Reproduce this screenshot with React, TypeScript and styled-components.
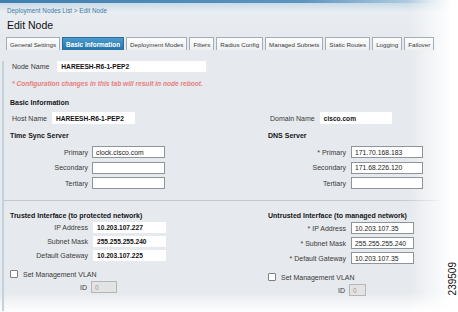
import React from "react";
import styled, {createGlobalStyle} from "styled-components";

const GlobalStyle = createGlobalStyle`
  html, body {
    margin: 0;
    padding: 0;
    background: #ffffff;
  }
  body {
    font-family: "Liberation Sans", Arial, sans-serif;
  }
`

interface IField {
    label: string
    value?: string
    required?: boolean
}

const tabs = [
    "General Settings",
    "Basic Information",
    "Deployment Modes",
    "Filters",
    "Radius Config",
    "Managed Subnets",
    "Static Routes",
    "Logging",
    "Failover",
]

const timeSync: IField[] = [
    {label: "Primary", value: "clock.cisco.com"},
    {label: "Secondary"},
    {label: "Tertiary"},
]
const dnsServer: IField[] = [
    {label: "Primary", value: "171.70.168.183", required: true},
    {label: "Secondary", value: "171.68.226.120"},
    {label: "Tertiary"},
]
const trusted: IField[] = [
    {label: "IP Address", value: "10.203.107.227"},
    {label: "Subnet Mask", value: "255.255.255.240"},
    {label: "Default Gateway", value: "10.203.107.225"},
]
const untrusted: IField[] = [
    {label: "IP Address", value: "10.203.107.35", required: true},
    {label: "Subnet Mask", value: "255.255.255.240", required: true},
    {label: "Default Gateway", value: "10.203.107.35", required: true},
]

const App: React.FC = () => {
    return (
        <Page>
            <GlobalStyle/>
            <Header>
                <Breadcrumb>Deployment Nodes List &gt; Edit Node</Breadcrumb>
                <Title>Edit Node</Title>
            </Header>
            <TabBar>
                {tabs.map((t) => (
                    <Tab key={t} $active={t === "Basic Information"}>{t}</Tab>
                ))}
            </TabBar>
            <Panel>
                <NodeRow>
                    <Label>Node Name</Label>
                    <PlainBox $width={149}>HAREESH-R6-1-PEP2</PlainBox>
                </NodeRow>
                <Warning>* Configuration changes in this tab will result in node reboot.</Warning>
                <SectionTitle $top={9}>Basic Information</SectionTitle>
                <Columns>
                    <InlineRow>
                        <Label>Host Name</Label>
                        <PlainBox $width={83}>HAREESH-R6-1-PEP2</PlainBox>
                    </InlineRow>
                    <InlineRow>
                        <Label>Domain Name</Label>
                        <PlainBox $width={72}>cisco.com</PlainBox>
                    </InlineRow>
                </Columns>
                <Columns $top={7}>
                    <div>
                        <SectionTitle>Time Sync Server</SectionTitle>
                        <FieldGrid $gap={4} $rowGap={3.5} $top={5}>
                            {timeSync.map((f) => (
                                <React.Fragment key={f.label}>
                                    <FieldLabel>{f.label}</FieldLabel>
                                    <Input $width={73}>{f.value}</Input>
                                </React.Fragment>
                            ))}
                        </FieldGrid>
                    </div>
                    <div>
                        <SectionTitle>DNS Server</SectionTitle>
                        <FieldGrid $gap={5} $rowGap={3.5} $top={5}>
                            {dnsServer.map((f) => (
                                <React.Fragment key={f.label}>
                                    <FieldLabel>{f.required ? "* " : ""}{f.label}</FieldLabel>
                                    <Input $width={72}>{f.value}</Input>
                                </React.Fragment>
                            ))}
                        </FieldGrid>
                    </div>
                </Columns>
                <Separator/>
                <Columns>
                    <div>
                        <SectionTitle>Trusted Interface (to protected network)</SectionTitle>
                        <FieldGrid $gap={5} $rowGap={3} $row={11} $top={1}>
                            {trusted.map((f) => (
                                <React.Fragment key={f.label}>
                                    <FieldLabel>{f.label}</FieldLabel>
                                    <PlainBox $width={73}>{f.value}</PlainBox>
                                </React.Fragment>
                            ))}
                        </FieldGrid>
                        <CheckRow>
                            <CheckBox/>
                            <CheckText>Set Management VLAN</CheckText>
                        </CheckRow>
                        <IdRow>
                            <FieldLabel>ID</FieldLabel>
                            <DisabledBox $width={26}>0</DisabledBox>
                        </IdRow>
                    </div>
                    <div>
                        <SectionTitle>Untrusted Interface (to managed network)</SectionTitle>
                        <FieldGrid $gap={5} $rowGap={3} $row={12} $top={1}>
                            {untrusted.map((f) => (
                                <React.Fragment key={f.label}>
                                    <FieldLabel>* {f.label}</FieldLabel>
                                    <Input $width={63}>{f.value}</Input>
                                </React.Fragment>
                            ))}
                        </FieldGrid>
                        <CheckRow>
                            <CheckBox/>
                            <CheckText>Set Management VLAN</CheckText>
                        </CheckRow>
                        <IdRow>
                            <FieldLabel>ID</FieldLabel>
                            <DisabledBox $width={17}>0</DisabledBox>
                        </IdRow>
                    </div>
                </Columns>
            </Panel>
            <FigureNumber>239509</FigureNumber>
        </Page>
    )
}

const Page = styled.div`
  position: relative;
  width: 458px;
  height: 312px;
  overflow: hidden;
  background:
    linear-gradient(to bottom, rgba(255,255,255,0) 292px, #ffffff 312px),
    linear-gradient(to right, rgba(255,255,255,0) 408px, #ffffff 452px),
    linear-gradient(to right, #3f7fae 0, #5b94bf 300px, rgba(200,220,235,0) 440px) top / 100% 3px no-repeat,
    linear-gradient(to bottom, #c9dbe8 3px, #e8edf1 12px, #e6e9ed 40px);
`
const Header = styled.div`
  padding: 7px 0 0 7px;
`
const Breadcrumb = styled.div`
  font-size: 6.3px;
  line-height: 8px;
  color: #3f7aa6;
`
const Title = styled.div`
  margin-top: 4px;
  font-size: 10.5px;
  line-height: 12px;
  color: #111;
`
const TabBar = styled.div`
  display: flex;
  gap: 2px;
  margin: 6px 0 0 6px;
`
const Tab = styled.div<{ $active?: boolean }>`
  height: 12px;
  padding: 0 3px;
  display: flex;
  align-items: center;
  font-size: ${(p) => (p.$active ? "6.4px" : "6.2px")};
  font-weight: ${(p) => (p.$active ? "bold" : "normal")};
  color: ${(p) => (p.$active ? "#ffffff" : "#3a3a3a")};
  border: 1px solid ${(p) => (p.$active ? "#2a6d98" : "#a3adb6")};
  border-bottom: none;
  background: ${(p) => (p.$active
    ? "linear-gradient(to bottom, #4d9bcc, #2274a8)"
    : "linear-gradient(to bottom, #fdfdfd, #eef0f2)")};
`
const Panel = styled.div`
  margin-left: 2px;
  padding: 0 0 0 6px;
  border-left: 2px solid #c5d1db;
  height: 250px;
`
const Label = styled.span`
  font-size: 7px;
  color: #3a3a3a;
  white-space: nowrap;
`
const NodeRow = styled.div`
  display: flex;
  align-items: center;
  gap: 8px;
  margin-top: 11px;
  padding-left: 2px;
`
const PlainBox = styled.div<{ $width: number }>`
  box-sizing: border-box;
  width: ${(p) => p.$width}px;
  height: 11px;
  padding-left: 4px;
  background: #ffffff;
  font-size: 6.6px;
  font-weight: bold;
  color: #111;
  display: flex;
  align-items: center;
  white-space: nowrap;
`
const Warning = styled.div`
  margin-top: 7px;
  padding-left: 2px;
  font-size: 6.6px;
  line-height: 10px;
  font-style: italic;
  font-weight: bold;
  color: #e58080;
`
const SectionTitle = styled.div<{ $top?: number }>`
  margin-top: ${(p) => p.$top ?? 0}px;
  font-size: 7px;
  line-height: 10px;
  font-weight: bold;
  color: #151515;
  white-space: nowrap;
`
const Columns = styled.div<{ $top?: number }>`
  display: grid;
  grid-template-columns: 258px 1fr;
  margin-top: ${(p) => p.$top ?? 4}px;
`
const InlineRow = styled.div`
  display: flex;
  align-items: center;
  gap: 5px;
  padding-left: 2px;
  & > ${PlainBox} {
    height: 12px;
  }
`
const FieldGrid = styled.div<{ $gap: number; $rowGap: number; $row?: number; $top: number }>`
  display: grid;
  grid-template-columns: 78px auto;
  grid-auto-rows: ${(p) => p.$row ?? 12}px;
  column-gap: ${(p) => p.$gap}px;
  row-gap: ${(p) => p.$rowGap}px;
  margin-top: ${(p) => p.$top}px;
  justify-content: start;
  align-items: center;
`
const FieldLabel = styled.span`
  font-size: 7px;
  color: #3a3a3a;
  text-align: right;
  white-space: nowrap;
`
const Input = styled.div<{ $width: number }>`
  box-sizing: border-box;
  width: ${(p) => p.$width}px;
  height: 100%;
  padding-left: 3px;
  background: #ffffff;
  border: 1px solid #8e9498;
  font-size: 6.8px;
  color: #222;
  display: flex;
  align-items: center;
  white-space: nowrap;
`
const Separator = styled.div`
  margin: 11px 14px 10px -6px;
  height: 1px;
  background: linear-gradient(to right, #c3c8cd 90%, rgba(195,200,205,0));
`
const CheckRow = styled.div`
  display: flex;
  align-items: center;
  gap: 5px;
  margin-top: 8px;
  height: 10px;
`
const CheckBox = styled.span`
  box-sizing: border-box;
  width: 8px;
  height: 8px;
  border: 1px solid #7d7f82;
  background: #ffffff;
  border-radius: 1px;
`
const CheckText = styled.span`
  font-size: 7px;
  color: #3a3a3a;
`
const IdRow = styled.div`
  display: grid;
  grid-template-columns: 77px auto;
  column-gap: 4px;
  align-items: center;
  justify-content: start;
  margin-top: 2px;
  height: 12px;
`
const DisabledBox = styled(Input)`
  background: #e3e3e3;
  border-color: #b4b6b8;
  color: #9a9a9a;
  font-size: 6.5px;
`
const FigureNumber = styled.div`
  position: absolute;
  left: 448px;
  top: 262px;
  writing-mode: vertical-rl;
  transform: rotate(180deg);
  font-size: 10px;
  line-height: 10px;
  color: #111;
`

export default App
